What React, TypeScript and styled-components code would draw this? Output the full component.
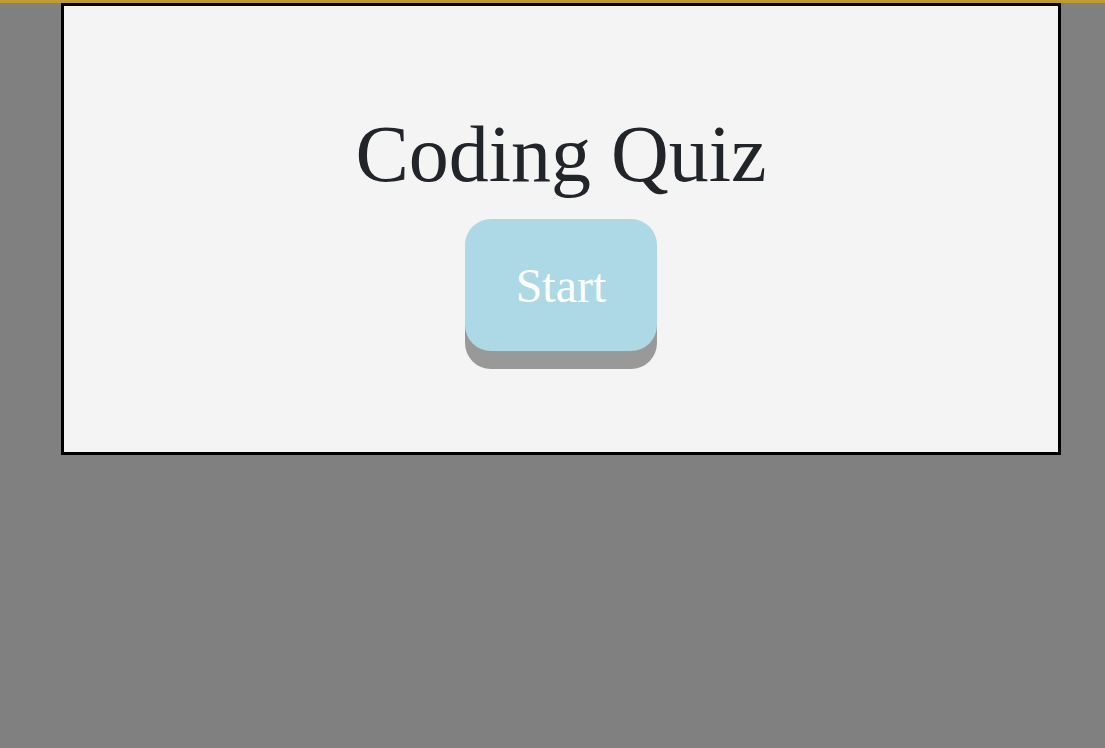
import React from "react";
import styled, { createGlobalStyle } from "styled-components";

const Global = createGlobalStyle`
  html, body { margin: 0; padding: 0; }
  body {
    background: #808080;
    border-top: 3px solid #bf9b30;
    min-height: 745px;
    font-family: "Liberation Serif", "Times New Roman", serif;
  }
`;

const Card = styled.main`
  box-sizing: border-box;
  width: 1000px;
  height: 452px;
  margin-left: 61px;
  border: 3px solid #000;
  background: #f4f4f4;
  display: flex;
  flex-direction: column;
  align-items: center;
  padding-top: 103px;
  gap: 19px;
`;

const Title = styled.h1`
  margin: 0;
  font-size: 80px;
  font-weight: 400;
  color: #212529;
  line-height: normal;
`;

const StartButton = styled.button`
  width: 192px;
  height: 132px;
  border: none;
  border-radius: 26px;
  background: #add8e6;
  color: #fff;
  font-family: "Liberation Serif", "Times New Roman", serif;
  font-size: 48px;
  box-shadow: 0 18px 0 #999;
  cursor: pointer;
  padding: 0;
`;

export default function App() {
  return (
    <>
      <Global />
      <Card>
        <Title>Coding Quiz</Title>
        <StartButton>Start</StartButton>
      </Card>
    </>
  );
}
